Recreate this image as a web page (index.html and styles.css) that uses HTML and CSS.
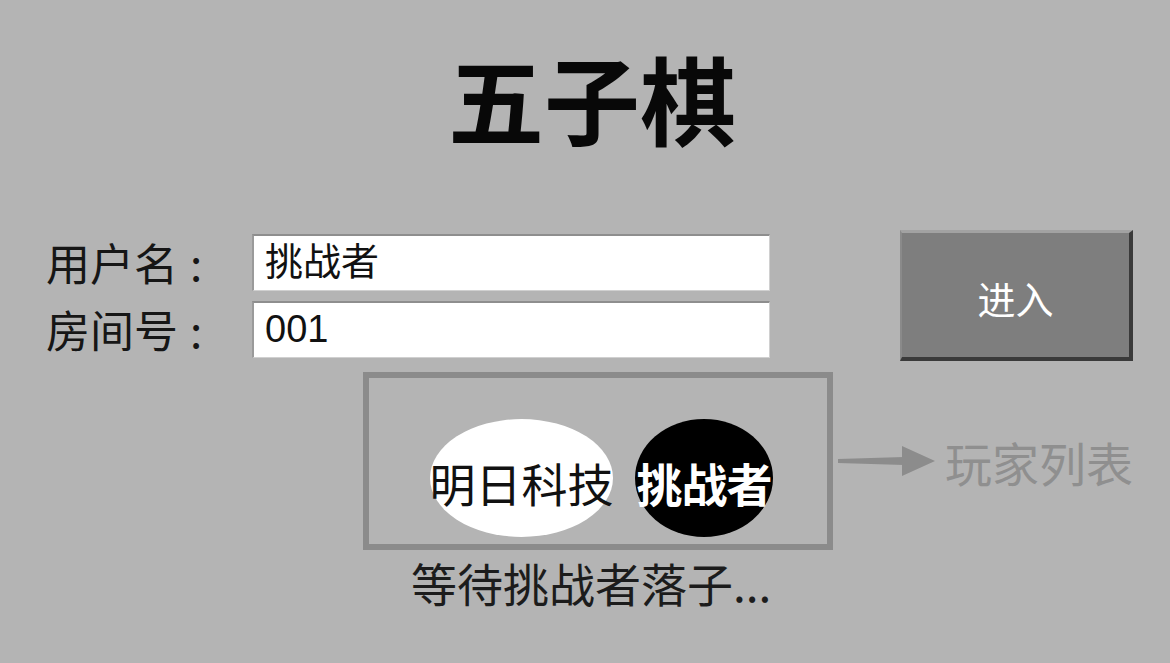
FILE: index.html
```html
<!DOCTYPE html>
<html lang="zh">
<head>
<meta charset="utf-8">
<title>五子棋</title>
<link rel="stylesheet" href="styles.css">
</head>
<body>
<div class="page">
  <h1 class="title">五子棋</h1>
  <div class="login">
    <div class="form">
      <div class="field">
        <label class="label">用户名<span class="colon">:</span></label>
        <div class="input">挑战者</div>
      </div>
      <div class="field">
        <label class="label">房间号<span class="colon">:</span></label>
        <div class="input">001</div>
      </div>
    </div>
    <button class="enter">进入</button>
  </div>
  <div class="game">
    <div class="board">
      <div class="stone white"><span>明日科技</span></div>
      <div class="stone black"><span>挑战者</span></div>
    </div>
    <div class="players">
      <svg class="arrow" width="97" height="32" viewBox="0 0 97 32">
        <polygon points="0,14 66,12 66,20 0,18" fill="#8c8c8c"/>
        <polygon points="64,1 97,16 64,31" fill="#8c8c8c"/>
      </svg>
      <span class="players-text">玩家列表</span>
    </div>
  </div>
  <div class="status">等待挑战者落子...</div>
</div>
</body>
</html>
```
FILE: styles.css
```css
* { box-sizing: border-box; }
html, body {
  margin: 0;
  padding: 0;
  background: #b4b4b4;
}
.page {
  width: 1170px;
  height: 663px;
  overflow: hidden;
  font-family: "Noto Sans CJK SC", "Liberation Sans", sans-serif;
  color: #111;
}
.title {
  margin: 0;
  padding: 32px 0 0 14px;
  height: 230px;
  font-size: 96px;
  font-weight: 700;
  line-height: 130px;
  text-align: center;
  color: #080808;
}
.login {
  display: flex;
  align-items: flex-start;
  padding-left: 46px;
}
.form {
  display: flex;
  flex-direction: column;
  gap: 10px;
  padding-top: 4px;
}
.field {
  display: flex;
  align-items: center;
  height: 57px;
}
.label {
  width: 206px;
  font-size: 44px;
  line-height: 57px;
  color: #161616;
  white-space: nowrap;
}
.colon {
  margin-left: 12px;
}
.input {
  width: 518px;
  height: 57px;
  background: #fff;
  border-top: 2px solid #8e8e8e;
  border-left: 2px solid #9a9a9a;
  border-right: 1px solid #d0d0d0;
  border-bottom: 1px solid #d0d0d0;
  padding-left: 11px;
  font-family: "Liberation Sans", "Noto Sans CJK SC", sans-serif;
  font-size: 38px;
  line-height: 52px;
  color: #111;
}
.enter {
  margin-left: 130px;
  width: 233px;
  height: 131px;
  background: #7e7e7e;
  border: none;
  border-top: 3px solid #a2a2a2;
  border-left: 2px solid #8a8a8a;
  border-right: 4px solid #3a3a3a;
  border-bottom: 4px solid #3a3a3a;
  color: #fff;
  font-family: "Noto Sans CJK SC", sans-serif;
  font-size: 38px;
  padding: 4px 0 0 0;
}
.game {
  display: flex;
  align-items: center;
  padding-left: 363px;
  margin-top: 11px;
}
.board {
  width: 470px;
  height: 178px;
  border: 6px solid #8b8b8b;
  display: flex;
  align-items: flex-end;
  padding: 0 0 7px 61px;
  gap: 22px;
}
.stone {
  height: 118px;
  display: flex;
  align-items: center;
  justify-content: center;
  border-radius: 50%;
  padding-top: 8px;
}
.stone span {
  font-size: 46px;
  white-space: nowrap;
}
.white {
  width: 183px;
  background: #fff;
  color: #111;
}
.black {
  width: 138px;
  background: #000;
  color: #fff;
}
.black span { font-weight: 700; font-size: 46px; letter-spacing: -1px; }
.players {
  display: flex;
  align-items: center;
  padding-left: 5px;
  padding-top: 0;
}
.arrow { display: block; }
.players-text {
  margin-left: 10px;
  font-size: 47px;
  color: #8f8f8f;
}
.status {
  padding-left: 411px;
  padding-top: 2px;
  font-size: 46px;
  line-height: 60px;
  color: #1c1c1c;
}
```
